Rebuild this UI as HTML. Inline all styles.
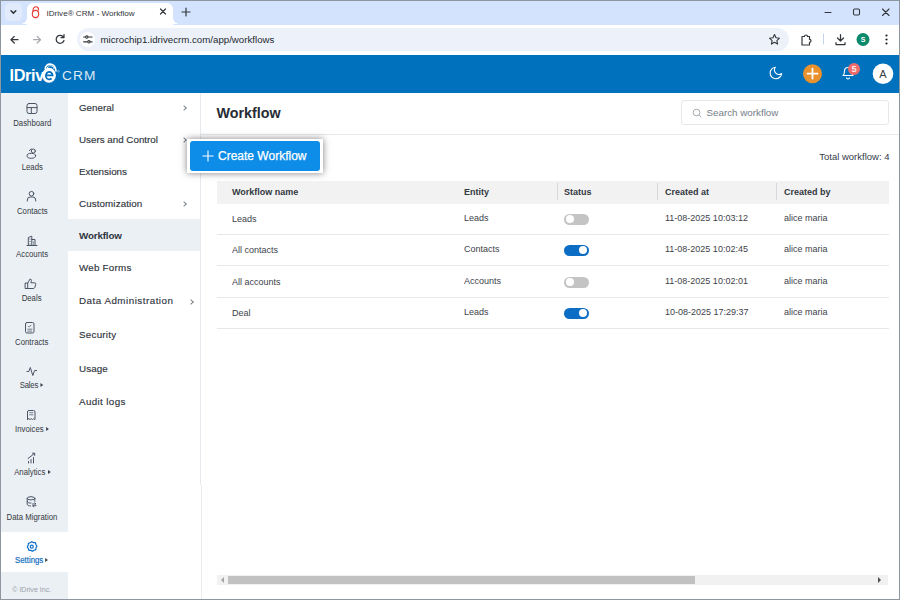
<!DOCTYPE html>
<html><head><meta charset="utf-8">
<style>
*{box-sizing:border-box;margin:0;padding:0}
html,body{width:900px;height:600px;overflow:hidden;background:#fff;font-family:"Liberation Sans","DejaVu Sans",sans-serif;color:#2b3440}
.abs{position:absolute}
#win{position:absolute;left:0;top:0;width:900px;height:600px;overflow:hidden;background:#fff}
#tabstrip{left:0;top:0;width:900px;height:25px;background:#d3e3fd}
#tab{left:26.800px;top:2.900px;width:146px;height:23px;background:#fff;border-radius:6px 6px 0 0}
#tab:before,#tab:after{content:"";position:absolute;bottom:1.500px;width:6px;height:6px;background:radial-gradient(circle at 0 0,rgba(255,255,255,0) 5.500px,#fff 6px)}
#tab:before{left:-6px}
#tab:after{right:-6px;background:radial-gradient(circle at 100% 0,rgba(255,255,255,0) 5.500px,#fff 6px)}
#toolbar{left:0;top:24.500px;width:900px;height:31px;background:#fff;border-radius:4px 4px 0 0}
#omni{left:77.300px;top:28px;width:712.200px;height:23px;border-radius:12px;background:#edf2fa}
#hdr{left:0;top:54.600px;width:900px;height:38.100px;background:#0071bc}
#side{left:0;top:93px;width:67.700px;height:507px;background:#ebf0f5}
#menu{left:68px;top:93px;width:133px;height:391.500px;background:#fff;border-right:1px solid #e6eaee}
.nav{position:absolute;left:0;width:64px;margin-top:.7px;text-align:center;font-size:8.3px;color:#353a41;white-space:nowrap}
.mi{position:absolute;left:79px;margin-top:.6px;font-size:9.8px;color:#2f353d;white-space:nowrap;-webkit-text-stroke:.15px #2f353d}
.th{position:absolute;top:187px;font-size:9px;font-weight:bold;color:#33383f;white-space:nowrap}
.td{position:absolute;font-size:9px;color:#3d4249;white-space:nowrap;margin-top:.5px}
.row{position:absolute;left:217px;width:671.700px;height:1px;background:#e6e9ec}
.tg{position:absolute;left:564px;width:24.5px;height:11px;border-radius:6px;margin-top:.5px}
.tg i{position:absolute;top:1.5px;width:8px;height:8px;border-radius:50%;background:#fff}
.tg.off{background:#c4c4c4}.tg.off i{left:1.5px}
.tg.on{background:#0b6ec4}.tg.on i{right:1.5px}
.sep{position:absolute;top:183px;width:1px;height:17px;background:#d5d8dc}
.sx{display:inline-block;transform:scaleX(.94);transform-origin:50% 50%}
.tri{display:inline-block;width:0;height:0;border:2.300px solid transparent;border-left:3px solid #3a424d;border-right:0;margin-left:2.500px;vertical-align:.5px}
.chev{margin:1px 0 0 1px;position:absolute;width:4px;height:4px;border-top:1px solid #7b838d;border-right:1px solid #7b838d;transform:rotate(45deg)}
</style></head><body>
<div id="win">
<!-- browser chrome -->
<div class="abs" id="tabstrip"></div>
<div class="abs" id="tab"></div>
<div class="abs" style="left:4.700px;top:3.200px;width:17.500px;height:17.400px;border-radius:5px;background:#e2ebfb"></div>
<div class="abs" style="left:46.500px;top:9px;font-size:8.100px;color:#30343a;white-space:nowrap">IDrive® CRM - Workflow</div>
<div class="abs" id="toolbar"></div>
<div class="abs" id="omni"></div>
<div class="abs" style="left:79.700px;top:31.500px;width:15.600px;height:15.600px;border-radius:50%;background:#fff"></div>
<div class="abs" id="url" style="left:100.500px;top:34px;font-size:9.700px;color:#24282d;white-space:nowrap">microchip1.idrivecrm.com/app/workflows</div>
<svg class="abs" style="left:0;top:0" width="900" height="55" viewBox="0 0 900 55" fill="none" stroke="#33373c" stroke-width="1.250" stroke-linecap="round" stroke-linejoin="round">
 <path d="M11 10.700 l2.400 2.400 l2.400 -2.400" stroke-width="1.500"/>
 <!-- favicon -->
 <g stroke="#e53935" stroke-width="1.1"><ellipse cx="35.5" cy="14" rx="3.2" ry="3.6"/><path d="M33 11 c0-3 1.3-4.2 3-4.2 s2.6 1.2 2.6 3.2"/></g>
 <path d="M160.500 9 l5 5 m0 -5 l-5 5" stroke-width="1.2"/>
 <path d="M186 8 v8 m-4 -4 h8" stroke-width="1.2"/>
 <!-- back -->
 <path d="M18 39.700 h-7 m3.300 -3.300 l-3.300 3.300 l3.300 3.300" />
 <path d="M33.500 39.700 h7 m-3.300 -3.300 l3.300 3.300 l-3.300 3.300" stroke="#a8abb0"/>
 <path d="M63.500 37 a4 4 0 1 0 .5 3.500 M64 34.500 v3 h-3" />
 <!-- tune icon -->
 <g stroke-width="1.150" transform="translate(-1.900 -.2)"><path d="M85.500 37.200 h1.500 m3.500 0 h3.500 M85.500 42 h3.500 m3.500 0 h1.500"/><circle cx="88.700" cy="37.200" r="1.200"/><circle cx="90.800" cy="42" r="1.200"/></g>
 <!-- star -->
 <path d="M774.500 34.500 l1.500 3.300 l3.500 .4 l-2.600 2.400 l.7 3.500 l-3.100 -1.800 l-3.100 1.800 l.7 -3.500 l-2.600 -2.400 l3.500 -.4 z" stroke-width="1.100"/>
 <!-- extension -->
 <path d="M802 36.500 h2.500 a1.500 1.500 0 0 1 3 0 h2 v2.800 a1.500 1.500 0 0 1 0 3 v2.700 h-7.500 z" stroke-width="1.200"/>
 <path d="M823.500 34 v10" stroke="#c5d3ea" stroke-width="1"/>
 <!-- download -->
 <path d="M840.500 34.500 v6.500 m-3 -3 l3 3 l3 -3 M836 42.500 v2 h9 v-2" stroke-width="1.250"/>
 <circle cx="863" cy="39.500" r="6.500" fill="#0d8a6c" stroke="none"/>
 <g fill="#1f1f1f" stroke="none"><circle cx="886.500" cy="35.500" r="1.100"/><circle cx="886.500" cy="39.500" r="1.100"/><circle cx="886.500" cy="43.500" r="1.100"/></g>
 <!-- window controls -->
 <path d="M825 12.500 h6" stroke-width="1.100"/>
 <rect x="853.500" y="9" width="6" height="6" rx="1.200" stroke-width="1.100"/>
 <path d="M882.500 9 l6.500 6.500 m0 -6.500 l-6.500 6.500" stroke-width="1.100"/>
</svg>
<div class="abs" style="left:859px;top:35.500px;width:8px;text-align:center;font-size:7px;color:#fff;font-weight:bold">S</div>

<!-- app header -->
<div class="abs" id="hdr"></div>
<div class="abs" style="left:9.500px;top:65.500px;font-size:16.300px;font-weight:bold;color:#fff;letter-spacing:-.35px;white-space:nowrap">IDriv</div>
<div class="abs" style="left:62px;top:68.300px;font-size:13.700px;color:rgba(255,255,255,.88);white-space:nowrap;letter-spacing:1.150px">CRM</div>
<svg class="abs" style="left:38px;top:58px" width="26" height="30" viewBox="38 58 26 30" fill="none">
 <path d="M45.200 69 C45.200 62.500, 55.300 61.800, 56 71.500" stroke="#fff" stroke-width="1.700"/>
 <path d="M47.300 68 C48 64.800, 53.300 64.800, 54 69" stroke="#fff" stroke-width=".9"/>
 <ellipse cx="49" cy="75.200" rx="6.900" ry="7.500" fill="#fff"/>
 <path d="M46 75.300 H52.600 A3.400 3.700 0 1 0 51.600 78.300" stroke="#0071bc" stroke-width="1.700"/>
 <circle cx="58.400" cy="71.300" r=".9" stroke="#b8d4ec" stroke-width=".6"/>
</svg>
<svg class="abs" style="left:760px;top:58px" width="140" height="32" viewBox="0 0 140 32" fill="none">
 <path transform="translate(8.200 7.300) scale(.64)" d="M21 12.790A9 9 0 1 1 11.210 3 7 7 0 0 0 21 12.790z" stroke="#fff" stroke-width="1.700" stroke-linejoin="round"/>
 <circle cx="52.500" cy="15.700" r="9.500" fill="#e8912d"/>
 <path d="M52.500 10.700 v10 m-5 -5 h10" stroke="#fff" stroke-width="1.800" stroke-linecap="round"/>
 <path d="M83 17.500 c1.500-1 1.500-3 1.500-4.500 a3.500 3.500 0 0 1 7 0 c0 1.500 0 3.500 1.500 4.500 z M86.500 19.500 a1.500 1.500 0 0 0 3 0" stroke="#fff" stroke-width="1.100" stroke-linejoin="round"/>
 <circle cx="94" cy="11" r="6" fill="#f26b6b"/>
 <circle cx="123" cy="15.700" r="10.300" fill="#fff"/>
</svg>
<div class="abs" style="left:850px;top:64px;width:8px;text-align:center;font-size:8.500px;color:#fff;-webkit-text-stroke:.2px #fff">5</div>
<div class="abs" style="left:878px;top:67.500px;width:10px;text-align:center;font-size:11px;color:#3a3f45">A</div>

<!-- left nav -->
<div class="abs" id="side"></div>
<div class="abs" style="left:0;top:531.500px;width:67.700px;height:40px;background:#fff"></div>
<div class="nav" style="top:117px"><span class="sx">Dashboard</span></div>
<div class="nav" style="top:161px"><span class="sx">Leads</span></div>
<div class="nav" style="top:205px"><span class="sx">Contacts</span></div>
<div class="nav" style="top:248.200px"><span class="sx">Accounts</span></div>
<div class="nav" style="top:292.500px"><span class="sx">Deals</span></div>
<div class="nav" style="top:336px"><span class="sx">Contracts</span></div>
<div class="nav" style="top:379.300px"><span class="sx" style="letter-spacing:-.25px">Sales<b class="tri"></b></span></div>
<div class="nav" style="top:423px"><span class="sx">Invoices<b class="tri"></b></span></div>
<div class="nav" style="top:466.300px"><span class="sx">Analytics<b class="tri"></b></span></div>
<div class="nav" style="top:511.500px"><span class="sx">Data Migration</span></div>
<div class="nav" style="top:554px;color:#1570bf;-webkit-text-stroke:.2px #1570bf"><span class="sx">Settings<b class="tri"></b></span></div>
<div class="nav" style="top:584px;font-size:7.5px;color:#9aa1a8"><span class="sx">© IDrive Inc.</span></div>
<svg class="abs" style="left:0;top:93px" width="68" height="507" viewBox="0 93 68 507" fill="none" stroke="#4a5563" stroke-width="1" stroke-linecap="round" stroke-linejoin="round">
 <!-- dashboard -->
 <rect x="27" y="103.500" width="10" height="10" rx="2"/><path d="M27 107.600 h10 M31.300 107.600 v5.900"/>
 <!-- leads -->
 <circle cx="33.300" cy="151" r="2"/><ellipse cx="31.300" cy="155.800" rx="4.300" ry="2.500"/><path d="M29.500 150.500 a2 2 0 0 1 2 -1.500"/>
 <!-- contacts -->
 <circle cx="31.500" cy="193.700" r="2.300"/><path d="M27.300 201 v-1 a3 3 0 0 1 3 -3 h2.400 a3 3 0 0 1 3 3 v1"/>
 <!-- accounts -->
 <path d="M27 245.500 h10 M28.300 245.500 v-8 l3.500 -1.300 v9.300 M31.800 239.500 h3.200 v6 M30 239 v.1 M30 241.500 v.1 M30 244 v.1 M33.500 242 v.1 M33.500 244 v.1"/>
 <!-- deals -->
 <path d="M25.500 283 h2.200 v5.500 h-2.200 z M27.700 283.300 l2.300 -4.300 c1.300 0 1.700 1 1.300 2.300 l-.4 1.500 h3.600 a1.200 1.200 0 0 1 1.200 1.500 l-.9 3.200 a1.500 1.500 0 0 1 -1.400 1 h-5.700"/>
 <!-- contracts -->
 <rect x="25.500" y="322.500" width="8.500" height="10.500" rx="1.500"/><path d="M28.300 326.200 l.9 .9 l1.800 -1.900 M27.800 329.200 h4 M27.800 331.100 h4" stroke-width=".75"/>
 <!-- sales -->
 <path d="M27 371.500 h1.800 l1.500 -4 l2.500 8 l1.800 -5 h2"/>
 <!-- invoices -->
 <path d="M27.500 419.500 v-7.500 a1.500 1.500 0 0 1 1.500 -1.500 h4.500 a1.500 1.500 0 0 1 1.500 1.500 v7.500 l-1.300 -.8 l-1.200 .8 l-1.300 -.8 l-1.200 .8 l-1.300 -.8 z "/><path d="M29.700 412.700 h3.200 M29.700 414.800 h3.200" stroke-width=".75"/>
 <!-- analytics -->
 <path d="M28.500 463 v-1.500 M31 463 v-3.500 M33.500 463 v-5.500 M28 458.500 l6.500 -5 M32.500 453.200 h2.200 v2.200"/>
 <!-- data migration -->
 <ellipse cx="31" cy="498.300" rx="3.800" ry="1.600"/><path d="M27.200 498.300 v6 c0 1 1.500 1.700 3.300 1.700 M34.800 498.300 v3 M27.200 501.500 c0 1 1.700 1.600 3.800 1.600 M32.500 504 h3.500 l-1.200 -1.200 M36 505.700 h-3.500 l1.200 1.200"/>
 <!-- settings -->
 <g stroke="#0b6ec4" stroke-width="1.200"><circle cx="31.800" cy="546.700" r="1.500"/><path d="M31.800 541.700 l1.700 .9 l1.900 .1 l.5 1.800 l1 1.600 l-.9 1.600 l-.2 1.900 l-1.800 .6 l-1.500 1.100 l-1.700 -.9 l-1.900 -.1 l-.6 -1.800 l-1 -1.600 l.9 -1.600 l.2 -1.900 l1.800 -.6 z"/></g>
</svg>
<!-- settings menu -->
<div class="abs" id="menu"></div>
<div class="abs" style="left:67.700px;top:219.200px;width:132.500px;height:31.600px;background:#ebf0f5"></div>
<div class="mi" style="top:101px">General</div>
<div class="mi" style="top:133px">Users and Control</div>
<div class="mi" style="top:165px">Extensions</div>
<div class="mi" style="top:197px;letter-spacing:.1px">Customization</div>
<div class="mi" style="top:229px;font-weight:bold;letter-spacing:-.15px;-webkit-text-stroke:0">Workflow</div>
<div class="mi" style="top:261px;letter-spacing:.23px">Web Forms</div>
<div class="mi" style="top:294.700px;letter-spacing:.5px">Data Administration</div>
<div class="mi" style="top:328.700px;letter-spacing:.25px">Security</div>
<div class="mi" style="top:362.500px;letter-spacing:.1px">Usage</div>
<div class="mi" style="top:395.700px;letter-spacing:.37px">Audit logs</div>
<div class="chev" style="left:181px;top:105px"></div>
<div class="chev" style="left:181px;top:137px"></div>
<div class="chev" style="left:181px;top:201px"></div>
<div class="chev" style="left:187.700px;top:299px"></div>

<div class="abs" style="left:201px;top:484.500px;width:1px;height:116px;background:#e9edf0"></div>
<!-- content -->
<div class="abs" style="left:216.500px;top:105px;font-size:14.300px;font-weight:bold;color:#262c33">Workflow</div>
<div class="abs" style="left:201px;top:133.600px;width:699px;height:1px;background:#e6e9ec"></div>
<div class="abs" style="left:681px;top:100px;width:208px;height:25px;border:1px solid #e5e8eb;border-radius:3px;background:#fff"></div>
<div class="abs" style="left:706.500px;top:106.700px;font-size:9.800px;color:#757e88">Search workflow</div>
<svg class="abs" style="left:690.500px;top:106.700px" width="12" height="12" viewBox="0 0 12 12" fill="none" stroke="#a7adb4" stroke-width="1"><circle cx="5.500" cy="5.500" r="3.300"/><path d="M8 8 l2.300 2.300"/></svg>
<div class="abs" style="left:761.500px;top:151px;width:128px;text-align:right;font-size:9.500px;color:#333c48;white-space:nowrap">Total workflow: 4</div>

<div class="abs" style="left:187px;top:138.700px;width:136.200px;height:34.500px;background:#fff;box-shadow:0 0 7px rgba(0,0,0,.5)"></div>
<div class="abs" style="left:190px;top:141px;width:130px;height:29.500px;background:#0d8de8;border-radius:3px"></div>
<div class="abs" style="left:218px;top:149px;font-size:12px;color:#fff;white-space:nowrap;-webkit-text-stroke:.25px #fff">Create Workflow</div>
<svg class="abs" style="left:202px;top:150px" width="12" height="12" viewBox="0 0 12 12" stroke="#fff" stroke-width="1.100"><path d="M6 .5 v11 M.5 6 h11"/></svg>

<div class="abs" style="left:217px;top:181px;width:671.700px;height:22.500px;background:#f2f2f2"></div>
<div class="th" style="left:232px">Workflow name</div>
<div class="th" style="left:464px">Entity</div>
<div class="th" style="left:564px">Status</div>
<div class="th" style="left:665px">Created at</div>
<div class="th" style="left:784px">Created by</div>
<div class="sep" style="left:557px"></div><div class="sep" style="left:657px"></div><div class="sep" style="left:776px"></div>

<div class="td" style="left:232px;top:213px">Leads</div><div class="td" style="left:464px;top:212px">Leads</div><div class="tg off" style="top:213px"><i></i></div><div class="td" style="left:665px;top:212px">11-08-2025 10:03:12</div><div class="td" style="left:784px;top:212px">alice maria</div>
<div class="row" style="top:234px"></div>
<div class="td" style="left:232px;top:244px">All contacts</div><div class="td" style="left:464px;top:243px">Contacts</div><div class="tg on" style="top:244px"><i></i></div><div class="td" style="left:665px;top:243px">11-08-2025 10:02:45</div><div class="td" style="left:784px;top:243px">alice maria</div>
<div class="row" style="top:265.400px"></div>
<div class="td" style="left:232px;top:276px">All accounts</div><div class="td" style="left:464px;top:275px">Accounts</div><div class="tg off" style="top:276px"><i></i></div><div class="td" style="left:665px;top:275px">11-08-2025 10:02:01</div><div class="td" style="left:784px;top:275px">alice maria</div>
<div class="row" style="top:296.600px"></div>
<div class="td" style="left:232px;top:307px">Deal</div><div class="td" style="left:464px;top:306px">Leads</div><div class="tg on" style="top:307px"><i></i></div><div class="td" style="left:665px;top:306px">10-08-2025 17:29:37</div><div class="td" style="left:784px;top:306px">alice maria</div>
<div class="row" style="top:328px"></div>

<!-- h scrollbar -->
<div class="abs" style="left:217.300px;top:574.500px;width:671px;height:10.300px;background:#f1f1f1"></div>
<div class="abs" style="left:228px;top:576px;width:467px;height:8px;background:#c1c1c1"></div>
<div class="abs" style="left:221px;top:576.700px;width:0;height:0;border:3px solid transparent;border-right:3px solid #a3a3a3;border-left:0"></div>
<div class="abs" style="left:878px;top:577px;width:0;height:0;border:3px solid transparent;border-left:3px solid #505050;border-right:0"></div>

<!-- window border -->
<div class="abs" style="left:0;top:0;width:1.300px;height:600px;background:#8e979f"></div><div class="abs" style="left:898.700px;top:0;width:1.300px;height:600px;background:#8e979f"></div><div class="abs" style="left:0;top:0;width:900px;height:1.300px;background:#8e979f"></div><div class="abs" style="left:0;top:598.700px;width:900px;height:1.300px;background:#8e979f"></div>
</div>
</body></html>
